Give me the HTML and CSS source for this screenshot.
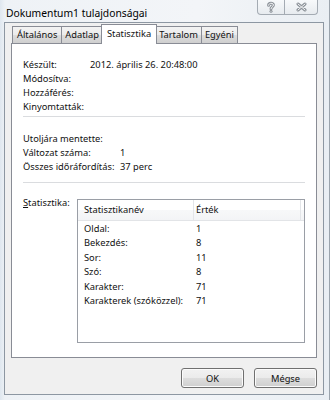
FILE: index.html
```html
<!DOCTYPE html>
<html lang="hu">
<head>
<meta charset="utf-8">
<title>Dokumentum1 tulajdonságai</title>
<link rel="stylesheet" href="styles.css">
</head>
<body>
<div class="window">
  <div class="titlebar">
    <span class="title">Dokumentum1 tulajdonságai</span>
    <div class="caption-buttons">
      <div class="cap-btn help">
        <svg width="10" height="12" viewBox="0 0 10 12">
          <path class="glyph-outer" d="M2.6 4.2 C2.6 1.6 7.4 1.6 7.4 4 C7.4 5.9 5 5.9 5 7.8"/>
          <circle class="glyph-dot-outer" cx="5" cy="10.3" r="1.5"/>
          <path class="glyph-inner" d="M2.6 4.2 C2.6 1.6 7.4 1.6 7.4 4 C7.4 5.9 5 5.9 5 7.8"/>
          <circle class="glyph-dot-inner" cx="5" cy="10.3" r="0.5"/>
        </svg>
      </div>
      <div class="cap-btn close">
        <svg width="11" height="10" viewBox="0 0 11 10">
          <path class="glyph-outer" d="M2 2 L9 8 M9 2 L2 8"/>
          <path class="glyph-inner" d="M2 2 L9 8 M9 2 L2 8"/>
        </svg>
      </div>
    </div>
  </div>
  <div class="client">
    <div class="tabs">
      <div class="tab">Általános</div>
      <div class="tab">Adatlap</div>
      <div class="tab active">Statisztika</div>
      <div class="tab">Tartalom</div>
      <div class="tab">Egyéni</div>
    </div>
    <div class="panel">
      <div class="props props-first">
        <div class="row"><span class="lbl">Készült:</span><span class="val">2012. április 26. 20:48:00</span></div>
        <div class="row"><span class="lbl">Módosítva:</span><span class="val"></span></div>
        <div class="row"><span class="lbl">Hozzáférés:</span><span class="val"></span></div>
        <div class="row"><span class="lbl">Kinyomtatták:</span><span class="val"></span></div>
      </div>
      <div class="sep sep-first"></div>
      <div class="props props-second">
        <div class="row"><span class="lbl">Utoljára mentette:</span><span class="val"></span></div>
        <div class="row"><span class="lbl">Változat száma:</span><span class="val">1</span></div>
        <div class="row"><span class="lbl">Összes időráfordítás:</span><span class="val">37 perc</span></div>
      </div>
      <div class="sep sep-second"></div>
      <div class="stats">
        <div class="stats-label"><u>S</u>tatisztika:</div>
        <div class="listbox">
          <div class="lv-header">
            <div class="hcol hname">Statisztikanév</div>
            <div class="hcol hval">Érték</div>
            <div class="hcol hfill"></div>
          </div>
          <div class="lv-body">
            <div class="lv-row"><span class="cname">Oldal:</span><span class="cval">1</span></div>
            <div class="lv-row"><span class="cname">Bekezdés:</span><span class="cval">8</span></div>
            <div class="lv-row"><span class="cname">Sor:</span><span class="cval">11</span></div>
            <div class="lv-row"><span class="cname">Szó:</span><span class="cval">8</span></div>
            <div class="lv-row"><span class="cname">Karakter:</span><span class="cval">71</span></div>
            <div class="lv-row"><span class="cname">Karakterek (szóközzel):</span><span class="cval">71</span></div>
          </div>
        </div>
      </div>
    </div>
    <div class="buttons">
      <button class="btn">OK</button>
      <button class="btn">Mégse</button>
    </div>
  </div>
</div>
</body>
</html>
```

FILE: styles.css
```css
html, body {
  margin: 0;
  padding: 0;
  background: #e8ecf0;
}

body {
  font-family: "Noto Sans", "Open Sans", "DejaVu Sans", sans-serif;
  font-size: 9.3px;
  color: #111;
}

.window {
  width: 330px;
  height: 400px;
  display: flex;
  flex-direction: column;
  box-sizing: border-box;
  background: linear-gradient(to right, #dfe7ef 0px, #eef2f6 5px, #f3f5f8 60%, #e9eef3 100%);
  border-right: 1px solid #9aa3ac;
}

.titlebar {
  height: 22px;
  flex: none;
  display: flex;
  align-items: flex-start;
  padding-left: 6px;
}

.title {
  font-size: 10.3px;
  line-height: 16px;
  padding-top: 5px;
  color: #000;
}

.caption-buttons {
  margin-left: auto;
  margin-right: 11px;
  display: flex;
}

.cap-btn {
  height: 15px;
  box-sizing: border-box;
  border: 1px solid #a4abb3;
  border-top: none;
  background: linear-gradient(to bottom, #f7f9fb, #e7ebef);
  display: flex;
  align-items: center;
  justify-content: center;
}

.cap-btn.help {
  width: 28px;
  border-radius: 0 0 0 4px;
}

.cap-btn.close {
  width: 34px;
  margin-left: -1px;
  border-radius: 0 0 4px 0;
}

.glyph-outer {
  fill: none;
  stroke: #8d939a;
  stroke-width: 3;
  stroke-linecap: round;
}

.glyph-inner {
  fill: none;
  stroke: #f6f7f8;
  stroke-width: 1;
  stroke-linecap: round;
}

.glyph-dot-outer {
  fill: #8d939a;
}

.glyph-dot-inner {
  fill: #f6f7f8;
}

.client {
  flex: 1;
  margin: 0 5px 5px 4px;
  border: 1px solid #8d97a2;
  background: #f0f0f0;
  padding: 1px 6px 6px 6px;
  display: flex;
  flex-direction: column;
  min-height: 0;
}

.tabs {
  height: 19px;
  flex: none;
  display: flex;
  align-items: flex-end;
  padding-left: 1px;
}

.tab {
  height: 17px;
  box-sizing: border-box;
  border: 1px solid #898c95;
  border-bottom: none;
  background: linear-gradient(to bottom, #f3f3f3, #ebebeb 50%, #dddddd 51%, #cfcfcf);
  padding: 0 3px;
  line-height: 16px;
  margin-left: -1px;
  white-space: nowrap;
}

.tab:first-child {
  margin-left: 0;
  padding: 0 4px;
}

.tab.active {
  height: 20px;
  margin-bottom: -1px;
  background: #ffffff;
  padding: 0 5px;
  line-height: 17px;
  position: relative;
  z-index: 1;
  margin-left: -2px;
  margin-right: -1px;
}

.panel {
  height: 315px;
  flex: none;
  box-sizing: border-box;
  background: #ffffff;
  border: 1px solid #898c95;
  padding: 14px 11px 14px 11px;
  display: flex;
  flex-direction: column;
}

.props {
  display: flex;
  flex-direction: column;
}

.row {
  height: 14px;
  line-height: 14px;
  display: flex;
  white-space: nowrap;
}

.props-first .lbl {
  width: 67px;
}

.props-second {
  margin-top: 15px;
}

.props-second .lbl {
  width: 97px;
}

.sep {
  height: 1px;
  background: #dadcdf;
  flex: none;
}

.sep-first {
  margin-top: 2px;
}

.sep-second {
  margin-top: 8px;
}

.stats {
  flex: 1;
  margin-top: 13px;
  display: flex;
  min-height: 0;
}

.stats-label {
  width: 54px;
  flex: none;
  line-height: 14px;
}

.stats-label u {
  text-decoration-thickness: 1px;
  text-underline-offset: 1px;
}

.listbox {
  flex: 1;
  margin-top: 3px;
  border: 1px solid #9a9ea6;
  background: #ffffff;
  display: flex;
  flex-direction: column;
}

.lv-header {
  height: 21px;
  flex: none;
  box-sizing: border-box;
  display: flex;
  border-bottom: 1px solid #e2e4e7;
  background: linear-gradient(to bottom, #ffffff, #ffffff 50%, #f7f8f9 51%, #f3f4f6);
}

.hcol {
  line-height: 20px;
  box-sizing: border-box;
  border-right: 1px solid #e3e5e8;
}

.hname {
  width: 116px;
  padding-left: 6px;
}

.hval {
  width: 107px;
  padding-left: 2px;
}

.hfill {
  flex: 1;
  border-right: none;
}

.lv-body {
  padding-top: 1px;
}

.lv-row {
  height: 14.4px;
  line-height: 14px;
  display: flex;
  white-space: nowrap;
}

.cname {
  width: 116px;
  padding-left: 6px;
  box-sizing: border-box;
}

.cval {
  padding-left: 2px;
}

.buttons {
  margin-top: 10px;
  height: 20px;
  flex: none;
  display: flex;
  justify-content: flex-end;
  gap: 10px;
}

.btn {
  width: 63px;
  height: 20px;
  box-sizing: border-box;
  border: 1px solid #707070;
  border-radius: 3px;
  background: linear-gradient(to bottom, #f2f2f2, #ebebeb 50%, #dddddd 51%, #cfcfcf);
  box-shadow: inset 0 0 0 1px #fbfbfb;
  font-family: "Noto Sans", "Open Sans", "DejaVu Sans", sans-serif;
  font-size: 9.3px;
  color: #111;
  padding: 0;
  line-height: 17px;
}
```
